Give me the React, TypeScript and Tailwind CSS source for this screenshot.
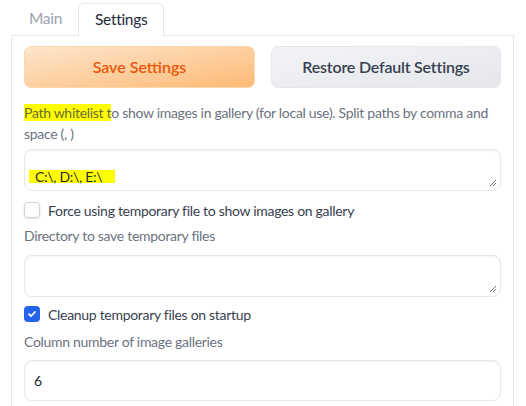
import React from "react";

const font = { fontFamily: "Lato, 'Noto Sans', sans-serif" };

function Resize() {
  return (
    <svg className="absolute right-[3px] bottom-[3px]" width="8" height="8" viewBox="0 0 8 8">
      <path d="M7 1L1 7M7 4L4 7" stroke="#6b7280" strokeWidth="1" />
    </svg>
  );
}

export default function App() {
  return (
    <div className="w-[526px] h-[406px] bg-white overflow-hidden" style={font}>
      <div className="flex items-end pl-[11px] h-[35px]">
        <div className="pl-[18px] pr-[16px] h-[33px] flex items-center text-[15.5px] tracking-[-0.3px] text-[#9ca3af]">Main</div>
        <div className="relative px-[16px] h-[33px] flex items-center text-[15.5px] tracking-[-0.3px] text-[#1f2937] border border-b-0 border-[#e5e7eb] rounded-t-[6px] bg-white -mb-px z-10">Settings</div>
      </div>
      <div className="ml-[11px] w-[503px] h-[400px] border border-[#e5e7eb] px-[12px] pt-[10px]">
        <div className="flex gap-[16px]">
          <button className="w-[231px] h-[42px] rounded-[7px] border border-[#fed7aa] bg-gradient-to-br from-[#fde5cb] to-[#fdba74] text-[#ea580c] font-semibold text-[16px]">Save Settings</button>
          <button className="w-[230px] h-[42px] rounded-[7px] border border-[#e5e7eb] bg-gradient-to-br from-[#f3f4f6] to-[#e5e7eb] text-[#374151] font-semibold text-[16px] tracking-[-0.2px]">Restore Default Settings</button>
        </div>
        <div className="mt-[14px] text-[14px] leading-[21px] tracking-[-0.3px] text-[#6b7280] pr-[6px]">
          <span className="bg-[#ffff00] text-[#6b6b35]">Path whitelist t</span>o show images in gallery (for local use). Split paths by comma and space (, )
        </div>
        <div className="relative mt-[5px] h-[42px] rounded-[8px] border border-[#e5e7eb] shadow-[inset_0_1px_2px_rgba(0,0,0,0.05)] pl-[4px] pt-[16px] text-[14px] tracking-[-0.3px] text-[#1f2937]">
          <span className="inline-block w-[86px] h-[13px] leading-[13px] bg-[#ffff00] pl-[6px]">C:\, D:\, E:\</span>
          <Resize />
        </div>
        <div className="mt-[9px] h-[20px] flex items-center gap-[8px] text-[14px] tracking-[-0.3px] text-[#374151]">
          <div className="w-[16px] h-[16px] rounded-[4px] border border-[#d1d5db] bg-white shadow-sm" />
          <span>Force using temporary file to show images on gallery</span>
        </div>
        <div className="mt-[5px] text-[14px] leading-[21px] tracking-[-0.3px] text-[#6b7280]">Directory to save temporary files</div>
        <div className="relative mt-[9px] h-[42px] rounded-[8px] border border-[#e5e7eb] shadow-[inset_0_1px_2px_rgba(0,0,0,0.05)]">
          <Resize />
        </div>
        <div className="mt-[7px] h-[20px] flex items-center gap-[8px] text-[14px] tracking-[-0.3px] text-[#374151]">
          <div className="w-[16px] h-[16px] rounded-[4px] bg-[#2563eb] flex items-center justify-center">
            <svg width="10" height="10" viewBox="0 0 10 10"><path d="M2 5.2L4 7.2L8 3" stroke="white" strokeWidth="1.8" fill="none" strokeLinecap="round" strokeLinejoin="round" /></svg>
          </div>
          <span>Cleanup temporary files on startup</span>
        </div>
        <div className="mt-[7px] text-[14px] leading-[21px] tracking-[-0.3px] text-[#6b7280]">Column number of image galleries</div>
        <div className="mt-[8px] h-[41px] rounded-[8px] border border-[#e5e7eb] shadow-[inset_0_1px_2px_rgba(0,0,0,0.05)] pl-[9px] flex items-center text-[14px] text-[#1f2937]">6</div>
      </div>
    </div>
  );
}
